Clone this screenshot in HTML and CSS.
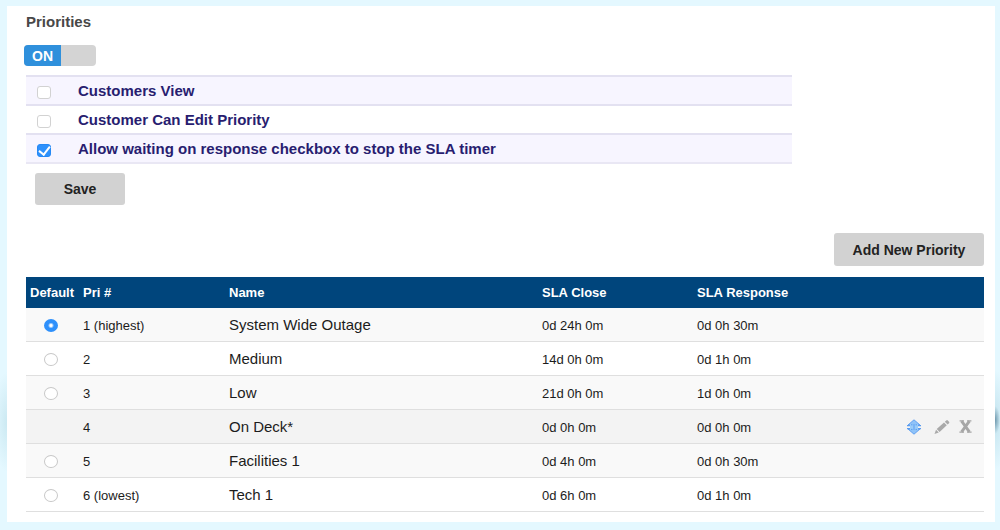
FILE: index.html
```html
<!DOCTYPE html>
<html lang="en">
<head>
<meta charset="utf-8">
<meta name="viewport" content="width=device-width, initial-scale=1">
<title>Priorities</title>
<link rel="stylesheet" href="styles.css">
</head>
<body>
<main class="panel">
  <h1 class="title">Priorities</h1>
  <button class="switch" type="button" role="switch" aria-checked="true" aria-label="Priorities"><span class="switch-on">ON</span></button>

  <form class="settings">
    <ul class="options">
      <li class="option"><input class="check" type="checkbox" id="opt-view"><label for="opt-view">Customers View</label></li>
      <li class="option"><input class="check" type="checkbox" id="opt-edit"><label for="opt-edit">Customer Can Edit Priority</label></li>
      <li class="option"><input class="check" type="checkbox" id="opt-sla" checked><label for="opt-sla">Allow waiting on response checkbox to stop the SLA timer</label></li>
    </ul>
    <button class="button save" type="button">Save</button>
  </form>

  <div class="toolbar"><button class="button add" type="button">Add New Priority</button></div>

  <table class="priorities">
    <thead>
      <tr>
        <th class="col-default" scope="col">Default</th>
        <th class="col-number" scope="col">Pri #</th>
        <th class="col-name" scope="col">Name</th>
        <th class="col-close" scope="col">SLA Close</th>
        <th class="col-response" scope="col">SLA Response</th>
        <td class="col-actions"></td>
      </tr>
    </thead>
    <tbody>
      <tr><td class="pick"><input class="radio" type="radio" name="default" aria-label="System Wide Outage" checked></td><td>1 (highest)</td><td class="name">System Wide Outage</td><td>0d 24h 0m</td><td>0d 0h 30m</td><td></td></tr>
      <tr><td class="pick"><input class="radio" type="radio" name="default" aria-label="Medium"></td><td>2</td><td class="name">Medium</td><td>14d 0h 0m</td><td>0d 1h 0m</td><td></td></tr>
      <tr><td class="pick"><input class="radio" type="radio" name="default" aria-label="Low"></td><td>3</td><td class="name">Low</td><td>21d 0h 0m</td><td>1d 0h 0m</td><td></td></tr>
      <tr class="active">
        <td class="pick"></td><td>4</td><td class="name">On Deck*</td><td>0d 0h 0m</td><td>0d 0h 0m</td>
        <td class="tools">
          <div class="actions">
            <button class="icon-button move" type="button" aria-label="Move">
              <svg width="16" height="16" viewBox="0 0 16 16">
                <path d="M8 .8 14 6H2ZM8 15.2 2 10h12Z" fill="#8fc3f8" stroke="#5a9cf0" stroke-width=".9"/>
                <path d="M1 6.6h14M1 9.6h14" stroke="#5a9cf0" stroke-width="1.3"/>
                <path d="M4 5h8v6H4z" fill="#9accf9"/>
                <path d="M5 5.8h1.5M9.5 5.8H11M5 10.4h1.5M9.5 10.4H11M8 5v6" stroke="#5a9cf0" fill="none"/>
              </svg>
            </button>
            <button class="icon-button edit" type="button" aria-label="Edit">
              <svg width="16" height="16" viewBox="0 0 16 16">
                <path d="M.5 15 2 10.8 4.8 13.6ZM2.7 10 10 3.4l2.8 2.9-7.2 6.6ZM10.8 2.7l1.5-1.3q.8-.6 1.5.1l1.2 1.2q.7.8 0 1.5l-1.4 1.3Z" fill="#a9a9a9"/>
              </svg>
            </button>
            <button class="icon-button delete" type="button" aria-label="Delete">
              <svg width="13" height="13" viewBox="0 0 13 13">
                <path d="M2.6 1.2 10.4 11.8M10.4 1.2 2.6 11.8" stroke="#a6a6a6" stroke-width="2.9"/>
                <path d="M.6.9H5M8 .9h4.4M.4 12.1H5M8 12.1h4.6" stroke="#a6a6a6" stroke-width="1.4"/>
              </svg>
            </button>
          </div>
        </td>
      </tr>
      <tr><td class="pick"><input class="radio" type="radio" name="default" aria-label="Facilities 1"></td><td>5</td><td class="name">Facilities 1</td><td>0d 4h 0m</td><td>0d 0h 30m</td><td></td></tr>
      <tr><td class="pick"><input class="radio" type="radio" name="default" aria-label="Tech 1"></td><td>6 (lowest)</td><td class="name">Tech 1</td><td>0d 6h 0m</td><td>0d 1h 0m</td><td></td></tr>
    </tbody>
  </table>
</main>
</body>
</html>
```
FILE: styles.css
```css
* { box-sizing: border-box; }

body {
  margin: 0;
  padding: 6px 5px 8px 7px;
  min-height: 100vh;
  display: flex;
  flex-direction: column;
  font-family: "Liberation Sans", Arial, Helvetica, sans-serif;
  font-size: 13px;
  color: #1c1c1c;
  background:
    radial-gradient(ellipse 5px 14px at calc(100% - 5px) 420px, #6f98ad, transparent),
    radial-gradient(ellipse 14px 50px at calc(100% - 5px) 420px, #c3e3ee, transparent),
    radial-gradient(ellipse 14px 50px at 7px 422px, #cbe9f2, transparent),
    #e4f8ff;
}

.panel {
  flex: 1;
  padding: 7px 11px 10px 19px;
  background: #fff;
}

button { font-family: inherit; cursor: pointer; }

.title {
  margin: 0;
  font-size: 15px;
  line-height: 18px;
  color: #484848;
}

.switch {
  display: flex;
  width: 72px;
  height: 21px;
  margin: 14px 0 9px -2px;
  padding: 0;
  border: 0;
  border-radius: 4px;
  overflow: hidden;
  background: #d4d4d4;
}

.switch-on {
  width: 37px;
  font-size: 14px;
  font-weight: bold;
  line-height: 22px;
  color: #fff;
  background: #2f90dc;
}

.options {
  width: 80%;
  margin: 0;
  padding: 0;
  list-style: none;
  border-bottom: 2px solid #e9e7f4;
}

.option {
  display: flex;
  align-items: center;
  height: 29px;
  padding-left: 11px;
  gap: 27px;
  border-top: 2px solid #e3e1f1;
  font-size: 15px;
  font-weight: bold;
  color: #281d70;
}

.option:nth-child(odd) { background: #f7f5ff; }
.option label { line-height: 27px; }

.check {
  appearance: none;
  display: grid;
  place-items: center;
  width: 14px;
  height: 13px;
  margin: 4px 0 0;
  border: 1px solid #d2d2d2;
  border-radius: 3px;
  background: #fff;
}

.check:checked { border-color: #2589f5; background: #2e91fc; }

.check:checked::after {
  content: "";
  width: 5px;
  height: 9px;
  border: solid #fff;
  border-width: 0 2px 2px 0;
  transform: translateY(-1px) rotate(38deg);
}

.button {
  padding: 0;
  border: 0;
  border-radius: 3px;
  font-size: 14px;
  font-weight: bold;
  color: #222;
  background: #d2d2d2;
}

.save {
  display: block;
  width: 90px;
  height: 32px;
  margin: 9px 0 0 9px;
}

.toolbar {
  display: flex;
  justify-content: flex-end;
  margin: 28px 0 11px;
}

.add { width: 150px; height: 33px; }

.priorities {
  width: 100%;
  table-layout: fixed;
  border-collapse: separate;
  border-spacing: 0;
}

.priorities th,
.priorities td { padding: 0 4px; text-align: left; }

.priorities thead tr { height: 31px; color: #fff; background: #00457c; }
.priorities tbody tr { height: 34px; }
.priorities tbody td { padding-top: 2px; border-bottom: 1px solid #dfdfdf; }
.priorities tbody tr:nth-child(odd) { background: #f9f9f9; }
.priorities tbody .active { background: #f3f3f3; }
.priorities tbody .name { padding-top: 0; font-size: 15px; }
.priorities tbody .tools { padding-top: 0; }
.priorities .pick { padding-left: 18px; }

.col-default { width: 53px; }
.col-number { width: 146px; }
.col-close { width: 155px; }
.col-response { width: 155px; }
.col-actions { width: 136px; }

.radio {
  appearance: none;
  display: block;
  width: 14px;
  height: 13px;
  margin: 0;
  border: 1px solid #c8c8c8;
  border-radius: 50%;
  background: #fff;
}

.radio:checked {
  border: 0;
  background: radial-gradient(circle, #fff 1px, #2e90fb 3px);
}

.actions {
  display: flex;
  align-items: center;
  justify-content: flex-end;
  gap: 9px;
  padding-right: 8px;
}

.icon-button { padding: 0; border: 0; background: none; }
.icon-button svg { display: block; }
.move { margin-right: 3px; }
```
